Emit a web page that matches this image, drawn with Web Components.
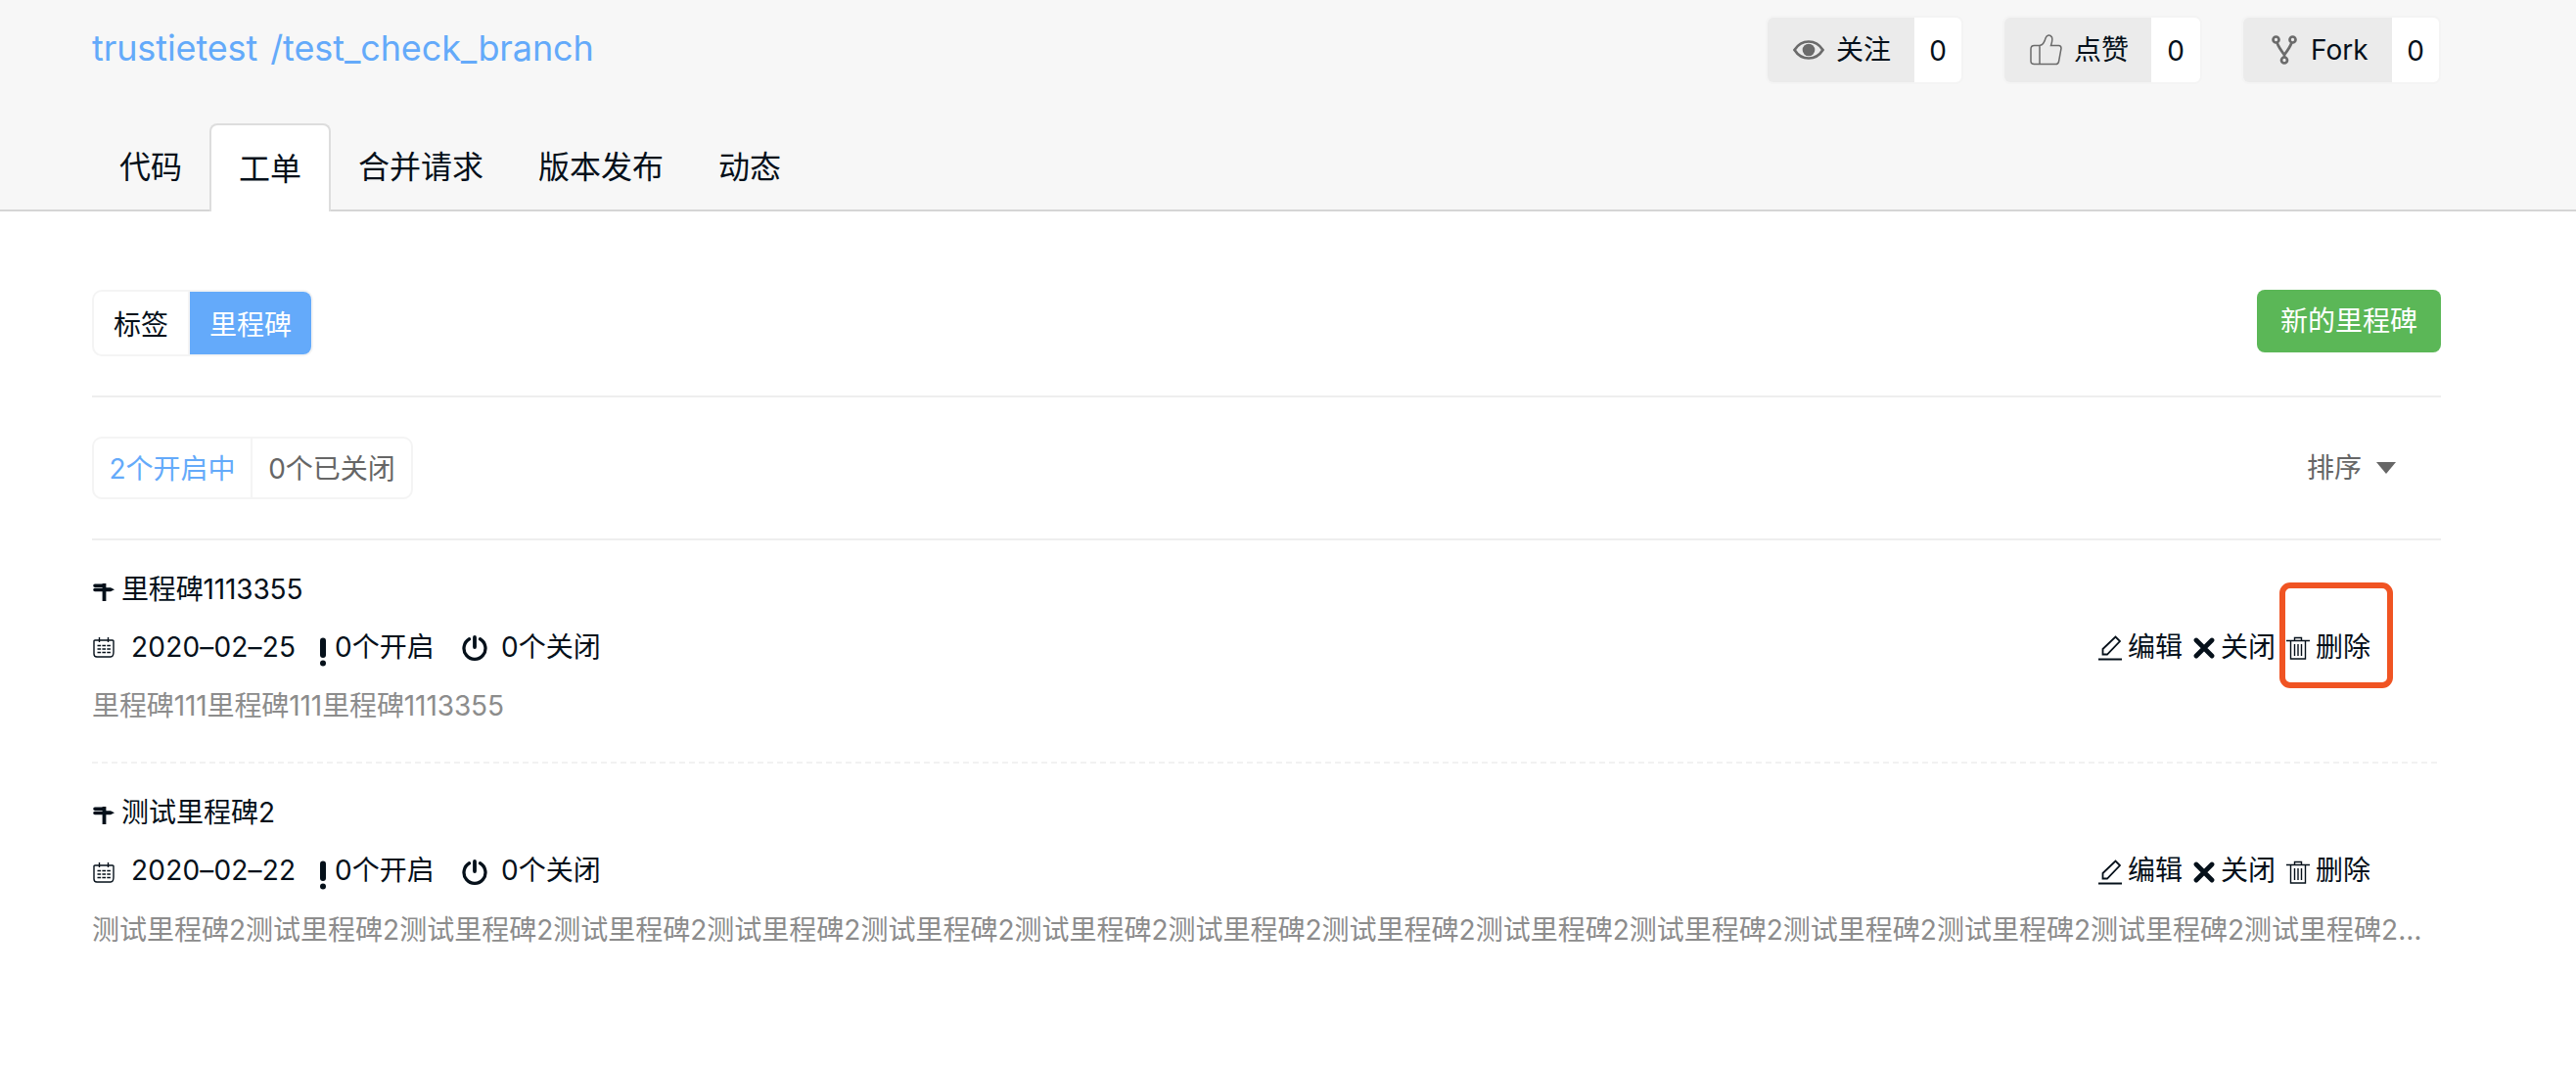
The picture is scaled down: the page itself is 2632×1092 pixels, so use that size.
<!DOCTYPE html>
<html lang="zh-CN">
<head>
<meta charset="UTF-8">
<title>trustietest /test_check_branch</title>
<style>
    body {
        margin: 0;
        background: #fff;
        color: #05101a;
        font-family: Inter, "Noto Sans CJK SC", sans-serif;
        font-size: 28px;
        line-height: 40px;
    }
    main {
        width: 2400px;
        margin-left: 94px;
    }
</style>
</head>
<body>
    <repo-header></repo-header>
    <main>
        <milestone-toolbar></milestone-toolbar>
        <milestone-filter></milestone-filter>
        <milestone-item date="2020-02-25" marked>
            <span slot="title" style="letter-spacing: -0.15px">里程碑1113355</span>
            <span slot="desc" style="letter-spacing: -0.1px">里程碑111里程碑111里程碑1113355</span>
        </milestone-item>
        <milestone-item date="2020-02-22" class="last">
            <span slot="title">测试里程碑2</span>
            <span slot="desc">测试里程碑2测试里程碑2测试里程碑2测试里程碑2测试里程碑2测试里程碑2测试里程碑2测试里程碑2测试里程碑2测试里程碑2测试里程碑2测试里程碑2测试里程碑2测试里程碑2测试里程碑2…</span>
        </milestone-item>
    </main>

<script>
    const ICONS = {
        eye: { w: 32, h: 20, body: '<path d="M1.500 10C5 4.500 10 1.500 16 1.500S27 4.500 30.500 10C27 15.500 22 18.500 16 18.500S5 15.500 1.500 10Z" stroke-width="2.700"/><circle cx="16" cy="10" r="6.300" fill="currentColor" stroke="none"/>' },
        thumb: { w: 33, h: 32, body: '<path d="M10 11.500H4.500Q1 11.500 1 15V27.500Q1 30.500 4.500 30.500H26.500Q29 30.500 29.500 28L32 14.500Q32 11.500 29.500 11.500H21.500Q23.500 6 22.500 3Q21 .700 18.500 1.200Q17 1.600 16 4Q14.500 10.500 10 11.500V30.500" stroke-width="1.500"/>' },
        fork: { w: 26, h: 30, body: '<g stroke-width="2.700"><circle cx="4.500" cy="4.500" r="3"/><circle cx="21.500" cy="4.500" r="3"/><circle cx="13" cy="25.500" r="3"/><path d="M5.500 7.500Q7 12 13 20Q19 12 20.500 7.500M13 19V23"/></g>' },
        sign: { w: 22, h: 20, body: '<path d="M2 3.300H11M2 7.500H11" stroke-width="3.600" stroke-linecap="round"/><path d="M11 5.300H18L22 7.300L18 9.300H11Z" fill="currentColor" stroke="none"/><path d="M11.500 1V19" stroke-width="3.800"/>' },
        calendar: { w: 22, h: 21, body: '<path d="M21 15V4Q21 3 20 3H2Q1 3 1 4V17Q1 20 4 20H18M6.500 0V5M15.500 0V5M21 15Q21 20 18 20" stroke-width="1.400"/><path d="M4.500 8.500H18M4.500 12H18M4.500 15.500H18" stroke-width="1.600" stroke-dasharray="3.600 1.300"/>' },
        bang: { w: 8, h: 30, body: '<path d="M4 3.500V18" stroke-width="6" stroke-linecap="round"/><circle cx="4" cy="26.500" r="3" fill="currentColor" stroke="none"/>' },
        power: { w: 26, h: 26, body: '<path d="M7.500 3.800A11 11 0 1 0 18.500 3.800" stroke-width="3.300" stroke-linecap="round"/><path d="M13 2V12" stroke-width="3.800" stroke-linecap="round"/>' },
        edit: { w: 24, h: 26, body: '<path d="M0 24.500H24" stroke-width="2"/><path d="M4.500 19.500V14L17.500 1.500L22 6L9 19.500Z" stroke-width="1.800"/>' },
        close: { w: 22, h: 22, body: '<path d="M3 3L19 19M19 3L3 19" stroke-width="4.800" stroke-linecap="round"/>' },
        trash: { w: 24, h: 24, body: '<path d="M0 4.500H24M8.500 4V1.500H15.500V4M4.500 5V23H19.500V5M8.500 8V20M12 8V20M15.500 8V20" stroke-width="1.400"/>' },
        caret: { w: 20, h: 12, body: '<path d="M0 0H20L10 12Z" fill="currentColor" stroke="none"/>' }
    };

    class UiIcon extends HTMLElement {
        constructor() {
            super();
            this.attachShadow({ mode: 'open' });
        }

        connectedCallback() {
            const icon = ICONS[this.getAttribute('name')];
            this.shadowRoot.innerHTML = `
                <style>
                    :host { display: block; flex: none; }
                    svg { display: block; }
                </style>
                <svg width="${icon.w}" height="${icon.h}" viewBox="0 0 ${icon.w} ${icon.h}" fill="none" stroke="currentColor" stroke-width="2.2">${icon.body}</svg>
            `;
        }
    }

    class CountButton extends HTMLElement {
        constructor() {
            super();
            this.attachShadow({ mode: 'open' });
        }

        connectedCallback() {
            this.shadowRoot.innerHTML = `
                <style>
                    :host {
                        display: flex;
                        box-sizing: border-box;
                        height: 70px;
                        border: 2px solid #f4f4f4;
                        border-radius: 8px;
                        overflow: hidden;
                    }
                    .action {
                        display: flex;
                        align-items: center;
                        box-sizing: border-box;
                        width: var(--action-width, 150px);
                        padding-left: var(--action-pad, 26px);
                        background: #ebebeb;
                    }
                    ui-icon { color: #6b6b6b; margin-right: var(--icon-gap, 12px); }
                    .label { margin-top: -1px; }
                    .count {
                        flex: 1;
                        padding-top: 14px;
                        text-align: center;
                        background: #fff;
                    }
                </style>
                <div class="action">
                    <ui-icon name="${this.getAttribute('icon')}"></ui-icon>
                    <span class="label"><slot></slot></span>
                </div>
                <div class="count">0</div>
            `;
        }
    }

    class RepoHeader extends HTMLElement {
        constructor() {
            super();
            this.attachShadow({ mode: 'open' });
            this.shadowRoot.innerHTML = `
                <style>
                    :host {
                        display: flex;
                        flex-direction: column;
                        justify-content: space-between;
                        box-sizing: border-box;
                        height: 216px;
                        padding: 16px 138px 0 94px;
                        background: linear-gradient(#d5d5d5, #d5d5d5) bottom / 100% 2px no-repeat #f7f7f7;
                    }
                    .top {
                        display: flex;
                        justify-content: space-between;
                    }
                    .title {
                        padding-top: 8px;
                        color: #64aafa;
                        font-size: 36px;
                        line-height: 50px;
                        word-spacing: 3px;
                        letter-spacing: -.1px;
                    }
                    .buttons { display: flex; gap: 40px; }
                    nav {
                        display: flex;
                        font-size: 32px;
                        line-height: 89px;
                    }
                    nav a {
                        height: 90px;
                        padding: 0 28px;
                    }
                    nav a.active {
                        box-sizing: border-box;
                        border: 2px solid #ddd;
                        border-bottom: 0;
                        border-radius: 8px 8px 0 0;
                        background: #fff;
                    }
                </style>
                <div class="top">
                    <div class="title">trustietest /test_check_branch</div>
                    <div class="buttons">
                        <count-button icon="eye" style="width: 202px">关注</count-button>
                        <count-button icon="thumb" style="width: 204px">点赞</count-button>
                        <count-button icon="fork" style="width: 204px; --action-width: 152px; --action-pad: 29px; --icon-gap: 14px">Fork</count-button>
                    </div>
                </div>
                <nav><a>代码</a><a class="active">工单</a><a>合并请求</a><a>版本发布</a><a>动态</a></nav>
            `;
        }
    }

    class SegmentSwitch extends HTMLElement {
        constructor() {
            super();
            this.attachShadow({ mode: 'open' });
            this.shadowRoot.innerHTML = `
                <style>
                    :host {
                        display: flex;
                        box-sizing: border-box;
                        border: 2px solid #f4f4f4;
                        border-radius: 10px;
                        overflow: hidden;
                    }
                    ::slotted(*) {
                        box-sizing: border-box;
                        text-align: center;
                        white-space: nowrap;
                    }
                    ::slotted(:first-child) { border-right: 2px solid #f4f4f4; }
                </style>
                <slot></slot>
            `;
        }
    }

    class MilestoneToolbar extends HTMLElement {
        constructor() {
            super();
            this.attachShadow({ mode: 'open' });
            this.shadowRoot.innerHTML = `
                <style>
                    :host {
                        display: flex;
                        justify-content: space-between;
                        align-items: flex-start;
                        box-sizing: border-box;
                        height: 190px;
                        padding-top: 80px;
                        border-bottom: 2px solid #eee;
                    }
                    segment-switch { height: 68px; line-height: 68px; }
                    .tag { width: 98px; }
                    .milestone {
                        width: 124px;
                        background: #64aafa;
                        color: #fff;
                    }
                    .create {
                        width: 188px;
                        height: 64px;
                        border-radius: 8px;
                        background: #5bb757;
                        color: #fff;
                        line-height: 65px;
                        text-align: center;
                    }
                </style>
                <segment-switch>
                    <span class="tag">标签</span>
                    <span class="milestone">里程碑</span>
                </segment-switch>
                <a class="create">新的里程碑</a>
            `;
        }
    }

    class MilestoneFilter extends HTMLElement {
        constructor() {
            super();
            this.attachShadow({ mode: 'open' });
            this.shadowRoot.innerHTML = `
                <style>
                    :host {
                        display: flex;
                        justify-content: space-between;
                        align-items: center;
                        box-sizing: border-box;
                        height: 146px;
                        padding-right: 46px;
                        border-bottom: 2px solid #eee;
                        color: #666;
                    }
                    segment-switch { height: 64px; line-height: 62px; }
                    .open { width: 162px; color: #64aafa; }
                    .closed { width: 162px; }
                    .sort {
                        display: flex;
                        align-items: center;
                        gap: 15px;
                    }
                </style>
                <segment-switch>
                    <span class="open">2个开启中</span>
                    <span class="closed">0个已关闭</span>
                </segment-switch>
                <div class="sort">排序<ui-icon name="caret"></ui-icon></div>
            `;
        }
    }

    class MilestoneItem extends HTMLElement {
        constructor() {
            super();
            this.attachShadow({ mode: 'open' });
            this.shadowRoot.innerHTML = `
                <style>
                    :host {
                        display: flex;
                        flex-direction: column;
                        box-sizing: border-box;
                        height: 228px;
                        padding-top: 30px;
                        background: repeating-linear-gradient(90deg, #f2f2f2 0 6px, transparent 6px 10px) bottom / 100% 2px no-repeat;
                    }
                    :host(.last) { background: none; --shift: 4px; --desc-gap: 21px; }
                    .title, .row, .meta, .actions, .actions a {
                        display: flex;
                        align-items: center;
                    }
                    .title { gap: 7px; padding-left: 1px; }
                    .title ui-icon { margin-top: 6px; }
                    .row {
                        justify-content: space-between;
                        height: 40px;
                        margin-top: 19px;
                    }
                    .row ui-icon { margin-top: var(--shift, 1px); }
                    .meta { padding-left: 1px; }
                    .date { width: 175px; margin-left: 17px; letter-spacing: .2px; }
                    .opened { width: 104px; margin-left: 8px; }
                    .meta .bang { margin: 10px 0 0 17px; }
                    .power { margin-left: 26px; }
                    .shut { margin-left: 14px; }
                    .actions { position: relative; padding-right: 72px; gap: 11px; }
                    .actions a { gap: 6px; white-space: nowrap; }
                    .mark {
                        display: none;
                        position: absolute;
                        right: 49px;
                        top: -46px;
                        box-sizing: border-box;
                        width: 116px;
                        height: 108px;
                        border: 6px solid #f05423;
                        border-radius: 11px;
                    }
                    :host([marked]) .mark { display: block; }
                    .desc {
                        margin-top: var(--desc-gap, 20px);
                        color: #8c8c8c;
                        white-space: nowrap;
                    }
                </style>
                <div class="title"><ui-icon name="sign"></ui-icon><slot name="title"></slot></div>
                <div class="row">
                    <div class="meta">
                        <ui-icon name="calendar"></ui-icon>
                        <span class="date"></span>
                        <ui-icon class="bang" name="bang"></ui-icon>
                        <span class="opened">0个开启</span>
                        <ui-icon class="power" name="power"></ui-icon>
                        <span class="shut">0个关闭</span>
                    </div>
                    <div class="actions">
                        <a><ui-icon name="edit"></ui-icon>编辑</a>
                        <a><ui-icon name="close"></ui-icon>关闭</a>
                        <a><ui-icon name="trash"></ui-icon>删除</a>
                        <div class="mark"></div>
                    </div>
                </div>
                <div class="desc"><slot name="desc"></slot></div>
            `;
            // the date is set with long dashes
            this.shadowRoot.querySelector('.date').textContent = this.getAttribute('date').replace(/-/g, '–');
        }
    }

    customElements.define('ui-icon', UiIcon);
    customElements.define('count-button', CountButton);
    customElements.define('segment-switch', SegmentSwitch);
    customElements.define('repo-header', RepoHeader);
    customElements.define('milestone-toolbar', MilestoneToolbar);
    customElements.define('milestone-filter', MilestoneFilter);
    customElements.define('milestone-item', MilestoneItem);
</script>
</body>
</html>
